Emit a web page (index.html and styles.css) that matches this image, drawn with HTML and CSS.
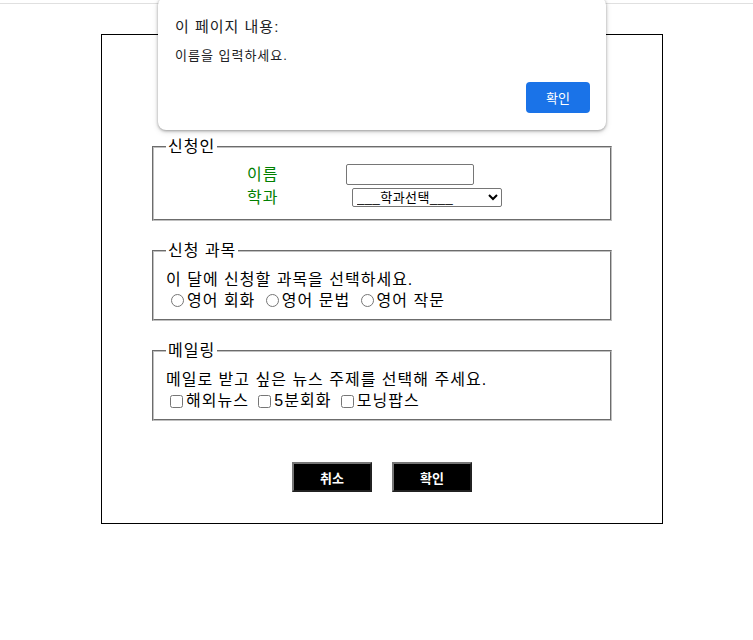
FILE: index.html
```html
<!DOCTYPE html>
<html lang="ko">
<head>
<meta charset="utf-8">
<title>수강 신청</title>
<link rel="stylesheet" href="styles.css">
</head>
<body>
<div class="topline"></div>
<form class="box">
  <fieldset class="fs fs-applicant">
    <legend>신청인</legend>
    <div class="row row-name"><span class="lbl">이름</span><input type="text" class="name"></div>
    <div class="row row-dept"><span class="lbl">학과</span><select class="dept"><option>___학과선택___</option></select></div>
  </fieldset>
  <fieldset class="fs">
    <legend>신청 과목</legend>
    <div class="line">이 달에 신청할 과목을 선택하세요.</div>
    <div class="line"><input type="radio" name="c">영어 회화 <input type="radio" name="c">영어 문법 <input type="radio" name="c">영어 작문</div>
  </fieldset>
  <fieldset class="fs">
    <legend>메일링</legend>
    <div class="line">메일로 받고 싶은 뉴스 주제를 선택해 주세요.</div>
    <div class="line"><input type="checkbox">해외뉴스 <input type="checkbox">5분회화 <input type="checkbox">모닝팝스</div>
  </fieldset>
  <div class="buttons">
    <button type="reset" class="btn">취소</button>
    <button type="button" class="btn">확인</button>
  </div>
</form>

<div class="dialog">
  <div class="dlg-title">이 페이지 내용:</div>
  <div class="dlg-msg">이름을 입력하세요.</div>
  <div class="dlg-actions"><button class="dlg-btn">확인</button></div>
</div>
</body>
</html>
```
FILE: styles.css
```css
html, body {
  margin: 0;
  padding: 0;
  background: #fff;
}
body {
  font-family: "Liberation Sans", "Noto Sans CJK KR", sans-serif;
  font-size: 16px;
  color: #000;
  position: relative;
}
.topline {
  height: 3px;
  border-bottom: 1px solid #e0e0e0;
}
.box {
  width: 560px;
  margin: 30px 0 0 101px;
  border: 1px solid #000;
  padding: 101px 0 31px;
  letter-spacing: 1px;
}
.fs {
  margin: 0 50px;
  padding: 8px 12px 8px;
  border: 2px groove #c0c0c0;
  line-height: 21px;
}
.fs + .fs {
  margin-top: 19px;
}
.fs legend {
  padding: 0 2px;
  line-height: 21px;
}
.row {
  display: flex;
  align-items: center;
}
.fs-applicant {
  padding-top: 6px;
  padding-bottom: 11px;
}
.row-name { height: 23px; }
.row-dept { height: 22px; }
.lbl {
  color: #008000;
  margin-left: 81px;
  width: 32px;
  white-space: nowrap;
}
.name {
  margin: 0 0 0 67px;
  width: 128px;
  height: 21px;
  box-sizing: border-box;
  border: 1px solid #767676;
  border-radius: 2px;
  padding: 1px 2px;
}
.dept {
  margin: 0 0 0 73px;
  width: 150px;
  height: 19px;
  box-sizing: border-box;
  font-family: "Liberation Sans", "Noto Sans CJK KR", sans-serif;
  font-size: 13px;
  letter-spacing: 0.5px;
  border: 1px solid #767676;
  border-radius: 2px;
  padding: 0;
  background: #fff;
  color: #000;
}
.line {
  white-space: nowrap;
}
.line input[type=radio] {
  margin: 3px 3px 0 5px;
  width: 13px;
  height: 13px;
  vertical-align: -1px;
}
.line input[type=checkbox] {
  margin: 3px 3px 3px 4px;
  width: 13px;
  height: 13px;
  vertical-align: -2px;
}
.buttons {
  display: flex;
  justify-content: center;
  gap: 20px;
  margin-top: 41px;
  letter-spacing: 0;
}
.btn {
  width: 80px;
  height: 30px;
  box-sizing: border-box;
  background: #000;
  color: #fff;
  border: 2px outset #767676;
  font-family: "Liberation Sans", "Noto Sans CJK KR", sans-serif;
  font-size: 13px;
  font-weight: bold;
  padding: 0;
}
.dialog {
  position: absolute;
  left: 158px;
  top: -3px;
  width: 448px;
  height: 133px;
  box-sizing: border-box;
  background: #fff;
  border-radius: 8px;
  box-shadow: 0 1px 3px rgba(0,0,0,0.35), 0 2px 6px rgba(0,0,0,0.12);
  padding: 20px 16px 0 17px;
  color: #202124;
  letter-spacing: 1px;
}
.dlg-title {
  font-size: 15px;
  line-height: 20px;
}
.dlg-msg {
  font-size: 13px;
  line-height: 18px;
  margin-top: 10px;
}
.dlg-actions {
  display: flex;
  justify-content: flex-end;
  margin-top: 17px;
  letter-spacing: 0;
}
.dlg-btn {
  width: 64px;
  height: 31px;
  background: #1a73e8;
  color: #fff;
  border: none;
  border-radius: 4px;
  font-family: "Liberation Sans", "Noto Sans CJK KR", sans-serif;
  font-size: 13px;
  padding: 0;
}
```
